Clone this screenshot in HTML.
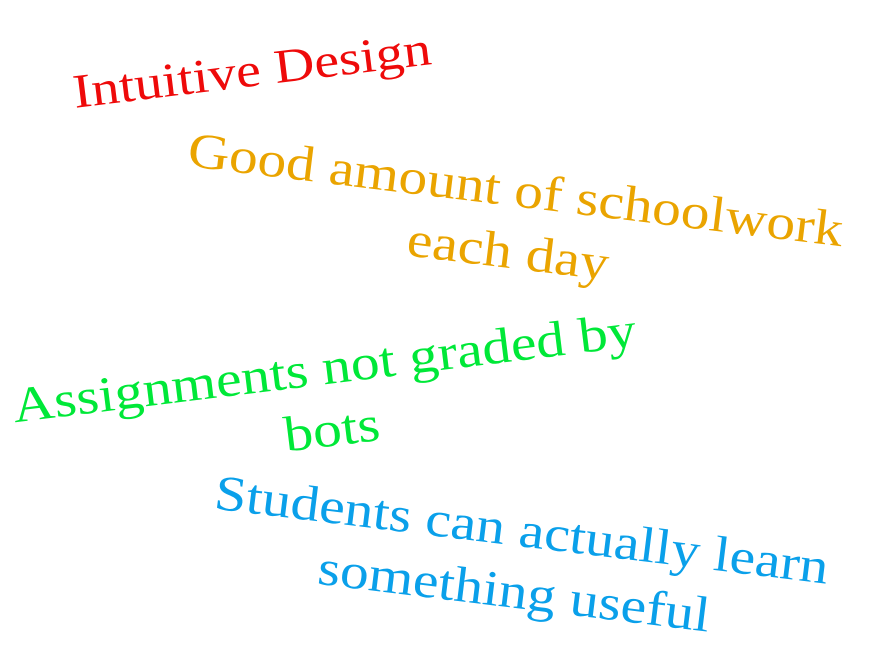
<!DOCTYPE html>
<html><head><style>
html,body{margin:0;padding:0;background:#fff;width:875px;height:656px;overflow:hidden;position:relative}
.t{position:absolute;width:800px;text-align:center;font-family:"Liberation Serif",serif;font-size:50px;line-height:62px;white-space:nowrap;transform-origin:50% 50%}
</style></head><body>
<div class="t" style="left:-148px;top:40px;height:62px;color:#ee0a0a;transform:rotate(-7deg) scaleX(1.16);font-size:48px">Intuitive Design</div>
<div class="t" style="left:112px;top:158px;height:124px;color:#eaa400;transform:rotate(7deg) scaleX(1.15)">Good amount of schoolwork<br>each day</div>
<div class="t" style="left:-72px;top:336px;height:124px;color:#00e838;transform:rotate(-7deg) scaleX(1.15)">Assignments not graded by<br>bots</div>
<div class="t" style="left:118px;top:498px;height:124px;color:#0aa0ea;transform:rotate(7deg) scaleX(1.15)">Students can actually learn<br>something useful</div>
</body></html>
